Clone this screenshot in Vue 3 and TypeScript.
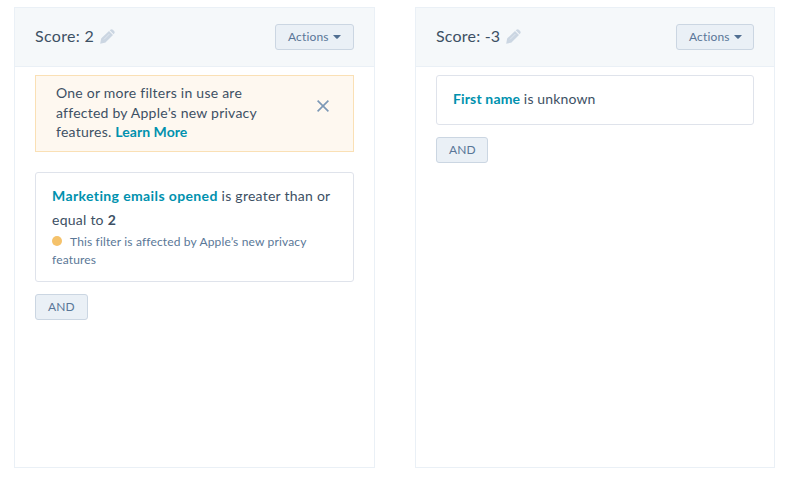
<script setup lang="ts">
interface Filter {
  property: string
  condition: string
  value?: string
  privacyAffected: boolean
}

interface ScorePanel {
  score: number
  showNotice: boolean
  filter: Filter
}

const panels: ScorePanel[] = [
  {
    score: 2,
    showNotice: true,
    filter: {
      property: 'Marketing emails opened',
      condition: 'is greater than or equal to',
      value: '2',
      privacyAffected: true,
    },
  },
  {
    score: -3,
    showNotice: false,
    filter: { property: 'First name', condition: 'is unknown', privacyAffected: false },
  },
]
</script>

<template>
  <main class="board">
    <section v-for="panel in panels" :key="panel.score" class="panel">
      <header class="head">
        <h2 class="score">Score: {{ panel.score }}</h2>
        <svg class="pencil" viewBox="0 0 15 15" aria-hidden="true">
          <path d="M.2 14.7 1 10.2Q1.1 9.6 1.6 9.1L9 1.9 13 5.9 5.7 13.2Q5.2 13.7 4.6 13.8Z" />
          <path d="M9.7 1.3 10.4.7Q11.6-.3 12.8.8L14.1 2.1Q15.2 3.3 14.2 4.5L13.6 5.2Z" />
          <path class="groove" d="M4 10.4 9.4 5" />
        </svg>
        <button class="btn actions" type="button">
          Actions
          <svg class="caret" viewBox="0 0 8 4" aria-hidden="true"><path d="M0 0H8L4.7 3.5Q4 4.2 3.3 3.5Z" /></svg>
        </button>
      </header>
      <div class="body">
        <div v-if="panel.showNotice" class="notice">
          <p class="notice-text">
            One or more filters in use are affected by Apple’s new privacy features. <a class="link">Learn More</a>
          </p>
          <svg class="close" viewBox="0 0 12 12" aria-hidden="true"><path d="M.6.6 11.4 11.4M11.4.6.6 11.4" /></svg>
        </div>
        <article class="card">
          <p class="rule">
            <a class="link">{{ panel.filter.property }}</a> {{ panel.filter.condition }}
            <b v-if="panel.filter.value" class="value">{{ panel.filter.value }}</b>
          </p>
          <p v-if="panel.filter.privacyAffected" class="hint">
            <span class="dot"></span>This filter is affected by Apple’s new privacy features
          </p>
        </article>
        <button class="btn and" type="button">AND</button>
      </div>
    </section>
  </main>
</template>

<style>
body {
  background: #fff;
}
</style>

<style scoped>
.board {
  box-sizing: border-box;
  height: 483px;
  padding: 7px 15px 15px 14px;
  display: grid;
  grid-template-columns: 361px 360px;
  column-gap: 40px;
  font-family: Lato, 'Liberation Sans', sans-serif;
  font-weight: 400;
  color: #3d5064;
}
.panel {
  box-sizing: border-box;
  border: 1px solid #eaf0f6;
  height: 461px;
}
.head {
  box-sizing: border-box;
  height: 59px;
  padding: 0 20px;
  display: flex;
  align-items: center;
  background: #f5f8fa;
  border-bottom: 1px solid #eaf0f6;
}
.score {
  margin: 0 0 2px;
  font-size: 16px;
  font-weight: inherit;
  line-height: 24px;
  letter-spacing: 0.33px;
  white-space: nowrap;
}
.panel:nth-child(2) .score {
  letter-spacing: 0.2px;
}
.pencil {
  width: 15px;
  height: 15px;
  margin: 0 0 2px 6px;
  fill: #cbd6e2;
}
.groove {
  fill: none;
  stroke: #e6edf4;
  stroke-width: 0.7;
}
.btn {
  box-sizing: border-box;
  height: 26px;
  padding: 0 0 0 12px;
  display: flex;
  align-items: center;
  border: 1px solid #cbd6e2;
  border-radius: 3px;
  background: #eaf0f6;
  color: #597698;
  font-family: inherit;
  font-weight: inherit;
  font-size: 12px;
  line-height: 16px;
  letter-spacing: 0.15px;
  white-space: nowrap;
}
.actions {
  width: 79px;
  margin-left: auto;
}
.panel:nth-child(2) .actions {
  width: 78px;
}
.caret {
  flex: none;
  width: 8px;
  height: 4px;
  margin-left: 4px;
  fill: #506e91;
}
.body {
  padding: 8px 20px;
}
.notice {
  box-sizing: border-box;
  height: 77px;
  margin-bottom: 20px;
  padding: 7px 24px 0 20px;
  display: flex;
  justify-content: space-between;
  border: 1px solid #fae0b5;
  background: #fef8f0;
}
.notice-text {
  width: 215px;
  margin: 0;
  font-size: 14px;
  line-height: 19.5px;
  letter-spacing: 0.24px;
}
.close {
  width: 12px;
  height: 12px;
  margin-top: 17px;
  fill: none;
  stroke: #7c98b6;
  stroke-width: 1.6;
}
.card {
  box-sizing: border-box;
  min-height: 50px;
  padding: 11px 16px;
  border: 1px solid #dfe3eb;
  border-radius: 3px;
  background: #fff;
}
.notice + .card {
  height: 110px;
}
.rule {
  margin: 0;
  font-size: 14px;
  line-height: 24px;
  letter-spacing: 0.25px;
}
.panel:nth-child(2) .rule {
  letter-spacing: 0.15px;
}
.link {
  color: #0091ae;
  font-weight: 700;
}
.notice .link {
  letter-spacing: 0.05px;
}
.notice + .card .link {
  letter-spacing: 0.38px;
}
.value {
  font-weight: 700;
}
.hint {
  margin: 1px 0 0;
  font-size: 12px;
  line-height: 18px;
  letter-spacing: 0.15px;
  color: #5a7797;
}
.dot {
  display: inline-block;
  width: 10px;
  height: 10px;
  margin-right: 8px;
  border-radius: 50%;
  background: #f5c26b;
}
.and {
  width: 53px;
  margin-top: 12px;
}
.panel:nth-child(2) .and {
  width: 52px;
}
</style>
